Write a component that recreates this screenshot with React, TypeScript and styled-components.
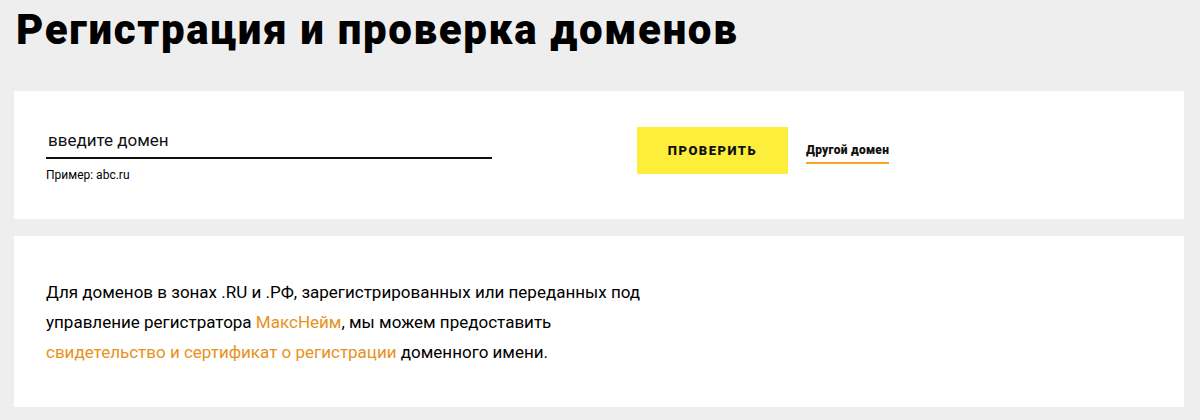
import styled, { createGlobalStyle } from 'styled-components';

const GlobalStyle = createGlobalStyle`
	* {
		box-sizing: border-box;
	}
	body {
		margin: 0;
		background: #eeeeee;
		font-family: Roboto, "Liberation Sans", sans-serif;
		color: #000;
	}
`;

const Page = styled.div`
	display: flex;
	flex-direction: column;
	gap: 17px;
	padding: 0 16px 0 14px;
`;

const Title = styled.h1`
	margin: 0 0 -17px;
	padding: 5px 0 0 2px;
	height: 91px;
	font-size: 42px;
	line-height: 50px;
	font-weight: 900;
	letter-spacing: 1.65px;
`;

const Card = styled.section<{ $padding: string }>`
	background: #fff;
	padding: ${(p) => p.$padding};
`;

const Form = styled.form`
	display: flex;
	align-items: flex-start;
	height: 92px;
`;

const Field = styled.div`
	width: 446px;
	margin-right: 145px;
`;

const Input = styled.input`
	display: block;
	width: 100%;
	height: 32px;
	border: 0;
	border-bottom: 2px solid #111;
	padding: 0 0 4px 2px;
	font-family: Roboto, "Liberation Sans", sans-serif;
	font-size: 17px;
	color: #000;
	outline: none;
	background: transparent;

	&::placeholder {
		color: #111;
	}
`;

const Hint = styled.div`
	margin-top: 8px;
	font-size: 12px;
	line-height: 16px;
`;

const Button = styled.button`
	width: 151px;
	height: 47px;
	border: 0;
	background: #fcee3a;
	font-family: Roboto, "Liberation Sans", sans-serif;
	font-size: 13px;
	font-weight: 900;
	letter-spacing: 1.5px;
	color: #111;
	cursor: pointer;
`;

const OtherLink = styled.a`
	margin: 15px 0 0 18px;
	padding-bottom: 4px;
	border-bottom: 2px solid #f5a623;
	font-size: 12px;
	font-weight: 900;
	line-height: 16px;
	letter-spacing: 0.25px;
	color: #111;
	text-decoration: none;
	cursor: pointer;
`;

const Text = styled.p`
	margin: 0;
	max-width: 615px;
	font-size: 17px;
	line-height: 30px;
`;

const Accent = styled.a`
	color: #e8911c;
	text-decoration: none;
`;

export default function App() {
	return (
		<>
			<GlobalStyle />
			<Page>
				<Title>Регистрация и проверка доменов</Title>

				<Card $padding='36px 32px 0'>
					<Form onSubmit={(e) => e.preventDefault()}>
						<Field>
							<Input placeholder='введите домен' />
							<Hint>Пример: abc.ru</Hint>
						</Field>
						<Button type='submit'>ПРОВЕРИТЬ</Button>
						<OtherLink>Другой домен</OtherLink>
					</Form>
				</Card>

				<Card $padding='41px 32px 40px'>
					<Text>
						Для доменов в зонах .RU и .РФ, зарегистрированных или переданных под
						управление регистратора <Accent>МаксНейм</Accent>, мы можем предоставить{' '}
						<Accent>свидетельство и сертификат о регистрации</Accent> доменного имени.
					</Text>
				</Card>
			</Page>
		</>
	);
}
